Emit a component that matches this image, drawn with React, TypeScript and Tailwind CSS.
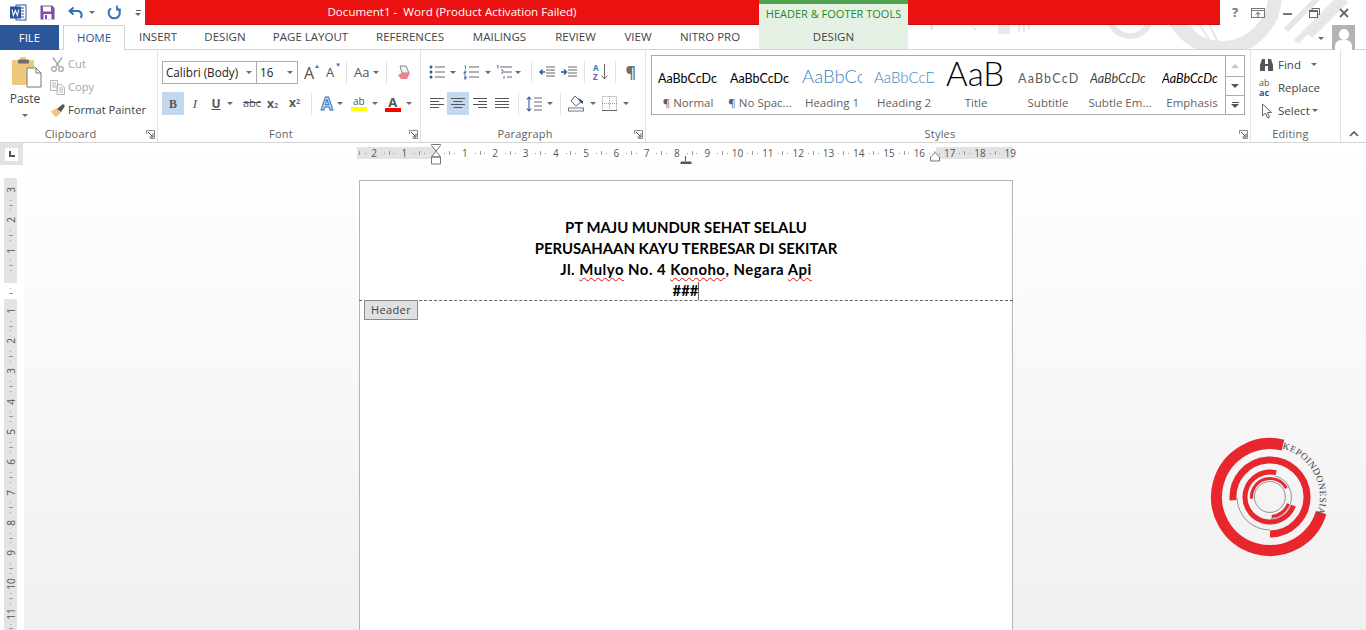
import type { ReactNode } from 'react';

const UI = "font-['Open_Sans',sans-serif]";

function Caret({ className = '' }: { className?: string }) {
  return <span className={`inline-block w-0 h-0 border-x-[3px] border-x-transparent border-t-[3px] border-t-[#6a6a6a] ${className}`} />;
}

function Sep({ className = '' }: { className?: string }) {
  return <span className={`inline-block w-px h-[22px] bg-[#e1e1e1] ${className}`} />;
}

function Lines({ rows, align = 'left' }: { rows: number[]; align?: 'left' | 'center' | 'right' }) {
  return (
    <svg width="16" height="14" viewBox="0 0 16 14">
      {rows.map((w, i) => {
        const x = align === 'left' ? 1 : align === 'right' ? 15 - w : 8 - w / 2;
        return <rect key={i} x={x} y={1 + i * 3} width={w} height="1" fill="#555" />;
      })}
    </svg>
  );
}

function Launcher() {
  return (
    <svg width="9" height="9" viewBox="0 0 9 9" className="shrink-0">
      <path d="M.5 4V.5H8.5V8.5H4" fill="none" stroke="#8a8a8a" />
      <path d="M2 2l4.500 4.500M7 3.500V7H3.500" fill="none" stroke="#555" />
    </svg>
  );
}

function Group({ w, label, children, launcher = true }: { w: string; label: string; children: ReactNode; launcher?: boolean }) {
  return (
    <div className={`${w} h-full shrink-0 flex flex-col border-r border-[#e2e2e2]`}>
      <div className="h-[75px] shrink-0">{children}</div>
      <div className={`relative h-[17px] pt-[2px] flex items-center justify-center text-[11px] text-[#5f5f5f] tracking-[0.2px] ${launcher ? 'pr-[16px]' : 'pr-[10px]'}`}>
        {label}
        {launcher && <span className="absolute right-[2px] top-[5px] flex"><Launcher /></span>}
      </div>
    </div>
  );
}

function Watermark() {
  return (
    <svg className="absolute left-0 top-0" width="1366" height="50" viewBox="0 0 1366 50">
      <g fill="none" stroke="#e7e7e7">
        <circle cx="1222" cy="-5" r="53" strokeWidth="14" />
        <circle cx="1130" cy="15" r="21" strokeWidth="6" />
        <path d="M1296 42l46-46M1310 36l36-36M1286 30l32-32" strokeWidth="6" />
        <path d="M1190 26l12 16M1198 22l14 22M1208 22l12 24" strokeWidth="2" />
      </g>
      <path d="M998 24h12v10h-12zM930 24h3v6h-3zM970 24l8 6h-4zM1018 24h2v8h-2zM1023 24h2v8h-2zM1028 24h2v6h-2z" fill="#e9e9e9" />
    </svg>
  );
}

function QuickAccess() {
  return (
    <div className="w-[145px] h-[25px] shrink-0 flex items-center">
      <svg className="ml-[10px]" width="17" height="17" viewBox="0 0 17 17">
        <rect x="6" y="1" width="10" height="15" fill="#fff" stroke="#2b579a" />
        <path d="M10 4h4M10 7h4M10 10h4M10 13h4" stroke="#2b579a" />
        <rect x="0" y="2.500" width="11" height="12" fill="#2b579a" />
        <path d="M2 5.500l1.400 6 2-5 2 5 1.400-6" fill="none" stroke="#fff" strokeWidth="1.100" />
      </svg>
      <svg className="ml-[13px]" width="15" height="15" viewBox="0 0 15 15">
        <path d="M.5.5H12L14.500 3V14.500H.5Z" fill="#7e4da5" />
        <rect x="3" y="1.500" width="8" height="5" fill="#fff" />
        <rect x="3.500" y="9" width="8" height="5.500" fill="#fff" />
        <rect x="5" y="10" width="2" height="4" fill="#7e4da5" />
      </svg>
      <svg className="ml-[13px]" width="16" height="15" viewBox="0 0 16 15">
        <path d="M5.500 2.500 1.500 6l4 3.500" fill="none" stroke="#2f6fb3" strokeWidth="2" />
        <path d="M2 6h7.500a4 4 0 0 1 3 6.800" fill="none" stroke="#2f6fb3" strokeWidth="2" />
      </svg>
      <Caret className="ml-[5px]" />
      <svg className="ml-[12px]" width="15" height="15" viewBox="0 0 15 15">
        <path d="M4 3.200a5.600 5.600 0 1 0 6.500 0" fill="none" stroke="#2f78b9" strokeWidth="2" />
        <path d="M10 .5V4.600H14" fill="none" stroke="#2f78b9" strokeWidth="1.800" />
      </svg>
      <span className="ml-[13px] flex flex-col items-center gap-[2px]">
        <span className="w-[5px] h-px bg-[#666]" />
        <Caret />
      </span>
    </div>
  );
}

function WindowButtons() {
  return (
    <div className="flex-1 h-[25px] flex items-center text-[#777]">
      <span className="w-[30px] text-center text-[13px] font-bold text-[#777]">?</span>
      <svg className="ml-[1px]" width="14" height="10" viewBox="0 0 14 10">
        <rect x=".5" y=".5" width="13" height="9" fill="none" stroke="#777" />
        <path d="M0 2.500h14" stroke="#777" />
        <path d="M7 9V4.500M4.800 6.500 7 4.300l2.200 2.200" fill="none" stroke="#555" />
      </svg>
      <span className="ml-[18px] w-[9px] h-[2px] mt-[3px] bg-[#777]" />
      <svg className="ml-[17px]" width="11" height="10" viewBox="0 0 11 10">
        <path d="M3 2.500V.5h7.500v6H8.500" fill="none" stroke="#666" />
        <rect x=".5" y="2.500" width="8" height="7" fill="none" stroke="#666" />
        <path d="M1 3.500h7" stroke="#666" />
      </svg>
      <svg className="ml-[19px]" width="10" height="10" viewBox="0 0 10 10">
        <path d="M1 1l8 8M9 1 1 9" stroke="#666" strokeWidth="1.800" />
      </svg>
    </div>
  );
}

const tabs = [
  { name: 'INSERT', w: 'w-[66px]' },
  { name: 'DESIGN', w: 'w-[68px]' },
  { name: 'PAGE LAYOUT', w: 'w-[103px]' },
  { name: 'REFERENCES', w: 'w-[96px]' },
  { name: 'MAILINGS', w: 'w-[83px]' },
  { name: 'REVIEW', w: 'w-[69px]' },
  { name: 'VIEW', w: 'w-[56px]' },
  { name: 'NITRO PRO', w: 'w-[88px]' },
];

function TabRow() {
  return (
    <div className="relative h-[25px] flex items-stretch border-b border-[#d4d4d4] text-[11.5px] text-[#444]">
      <div className="w-[59px] -mb-px flex items-center justify-center bg-[#2b579a] text-white">FILE</div>
      <div className="ml-[4px] w-[62px] -mb-px flex items-center justify-center bg-white border border-b-0 border-[#d4d4d4] text-[#2b579a]">HOME</div>
      {tabs.map(t => (
        <div key={t.name} className={`${t.w} flex items-center justify-center`}>{t.name}</div>
      ))}
      <div className="ml-[5px] w-[149px] flex items-center justify-center bg-[#e5f1e5]">DESIGN</div>
      <div className="flex-1 flex items-center justify-end">
        <Caret className="mr-[8px] mt-[3px]" />
        <div className="relative w-[23px] h-[25px] mr-[11px] bg-[#b3b3b3] overflow-hidden">
          <span className="absolute left-[7px] top-[4px] w-[10px] h-[11px] rounded-full bg-white" />
          <span className="absolute left-[3px] top-[15px] w-[17px] h-[12px] rounded-t-[6px] bg-white" />
        </div>
      </div>
    </div>
  );
}

function Clipboard() {
  return (
    <Group w="w-[158px]" label="Clipboard">
      <div className="flex h-full">
        <div className="w-[50px] flex flex-col items-center pt-[7px]">
          <svg className="ml-[4px]" width="30" height="32" viewBox="0 0 30 32">
            <path d="M0 3h8V0h6v3h8v25H0Z" fill="#eec87f" />
            <rect x="6" y="2.500" width="11" height="4" rx="1" fill="#6d6d6d" />
            <path d="M15 11h9l5 5v14H15Z" fill="#fff" stroke="#777" />
            <path d="M24 11v5h5" fill="none" stroke="#777" />
          </svg>
          <span className="mt-px text-[12px] text-[#444]">Paste</span>
          <Caret className="mt-[6px]" />
        </div>
        <div className="flex flex-col pt-[3px] text-[11.2px]">
          <div className="h-[23px] flex items-center text-[#a6a6a6]">
            <svg width="15" height="15" viewBox="0 0 15 15">
              <path d="M3 .5l6 9M12 .5l-6 9" stroke="#a8a8a8" strokeWidth="1.400" />
              <circle cx="4" cy="12" r="2.300" fill="none" stroke="#a8a8a8" strokeWidth="1.300" />
              <circle cx="11" cy="12" r="2.300" fill="none" stroke="#a8a8a8" strokeWidth="1.300" />
            </svg>
            <span className="ml-[3px]">Cut</span>
          </div>
          <div className="h-[23px] flex items-center text-[#a6a6a6]">
            <svg width="15" height="15" viewBox="0 0 15 15">
              <path d="M.5.5h7v10h-7zM7 4.500h4l3.500 3v7h-7.500z" fill="#fff" stroke="#b5b5b5" />
              <path d="M2 3h4M2 5h4M2 7h4M9 8h4M9 10h4M9 12h4" stroke="#b5b5b5" />
            </svg>
            <span className="ml-[3px]">Copy</span>
          </div>
          <div className="h-[23px] flex items-center text-[#444]">
            <svg width="16" height="15" viewBox="0 0 16 15">
              <path d="M1 8l6-3 4 5-5 4C4 13 2 10 1 8Z" fill="#eec87f" />
              <path d="M7 6l6-5 2 2-4 6" fill="#555" />
            </svg>
            <span className="ml-[2px] whitespace-nowrap">Format Painter</span>
          </div>
        </div>
      </div>
    </Group>
  );
}

function Font() {
  return (
    <Group w="w-[263px]" label="Font">
      <div className="pl-[4px] pt-[11px]">
        <div className="flex items-center h-[23px]">
          <div className="w-[95px] h-[23px] border border-[#ababab] flex items-center justify-between pl-[3px] pr-[4px] text-[11.7px] text-[#222]">
            <span className="whitespace-nowrap">Calibri (Body)</span><Caret />
          </div>
          <div className="w-[42px] h-[23px] -ml-px border border-[#ababab] flex items-center justify-between pl-[3px] pr-[4px] text-[11.7px] text-[#222]">
            <span>16</span><Caret />
          </div>
          <span className="ml-[6px] w-[15px] text-[16px] text-[#555] leading-none relative">A<span className="absolute left-[10px] top-[-2px] text-[6px] text-[#2f78b9]">▲</span></span>
          <span className="ml-[7px] w-[15px] text-[13px] text-[#555] leading-none relative">A<span className="absolute left-[9px] top-[-4px] text-[6px] text-[#2f78b9]">▼</span></span>
          <Sep className="ml-[5px]" />
          <span className="ml-[7px] text-[13px] text-[#555]">Aa</span>
          <Caret className="ml-[4px]" />
          <Sep className="ml-[7px]" />
          <svg className="ml-[9px]" width="16" height="16" viewBox="0 0 16 16">
            <path d="M4 1h6l3 7H6Z" fill="#f3f3f3" stroke="#888" />
            <path d="M6 8h8l-3 6H5L2 10Z" fill="#ee7f8b" />
          </svg>
        </div>
        <div className="flex items-center h-[23px] mt-[8px] text-[#555]">
          <span className="w-[22px] h-[23px] flex items-center justify-center bg-[#c3d7ef] text-[12px] font-bold font-['Liberation_Serif',serif]">B</span>
          <span className="ml-[5px] w-[12px] text-center text-[13px] italic font-['Liberation_Serif',serif]">I</span>
          <span className="ml-[9px] w-[12px] text-center text-[12px] font-bold underline">U</span>
          <Caret className="ml-[5px]" />
          <span className="ml-[10px] w-[19px] text-[11px] line-through">abc</span>
          <span className="ml-[5px] w-[15px] text-[12px] font-bold">x<span className="text-[7px] text-[#2f78b9]">2</span></span>
          <span className="ml-[7px] w-[15px] text-[12px] font-bold -mt-px">x<sup className="text-[7px] text-[#2f78b9]">2</sup></span>
          <Sep className="ml-[7px]" />
          <span className="ml-[9px] text-[17px] leading-none font-bold text-[#cfe0f5] [-webkit-text-stroke:1px_#2f78b9]">A</span>
          <Caret className="ml-[4px]" />
          <span className="ml-[8px] w-[16px] flex flex-col items-center">
            <span className="text-[10px] leading-[11px]">ab</span>
            <span className="w-[16px] h-[4px] bg-[#ffff00]" />
          </span>
          <Caret className="ml-[5px]" />
          <span className="ml-[7px] w-[16px] flex flex-col items-center">
            <span className="text-[13px] leading-[12px] font-bold">A</span>
            <span className="w-[16px] h-[4px] bg-[#ff0000]" />
          </span>
          <Caret className="ml-[5px]" />
        </div>
      </div>
    </Group>
  );
}

function Paragraph() {
  return (
    <Group w="w-[225px]" label="Paragraph">
      <div className="pl-[8px] pt-[13px]">
        <div className="flex items-center h-[18px]">
          <svg width="16" height="15" viewBox="0 0 16 15">
            <path d="M6 2h10M6 7h10M6 12h10" stroke="#666" />
            <circle cx="2" cy="2" r="1.500" fill="#2b579a" /><circle cx="2" cy="7" r="1.500" fill="#2b579a" /><circle cx="2" cy="12" r="1.500" fill="#2b579a" />
          </svg>
          <Caret className="ml-[5px]" />
          <svg className="ml-[7px]" width="16" height="15" viewBox="0 0 16 15">
            <path d="M6 2h10M6 7h10M6 12h10" stroke="#666" />
            <path d="M1.500 1h1v3M1 6h2v1.500H1V9h2M1 11h2v3H1M1 12.500h2" fill="none" stroke="#2b579a" strokeWidth=".8" />
          </svg>
          <Caret className="ml-[6px]" />
          <svg className="ml-[5px]" width="16" height="15" viewBox="0 0 16 15">
            <path d="M4 2h12M8 7h8M11 12h5" stroke="#666" />
            <path d="M1 .5h1v3M5 5h2v3H5M8 11v3" fill="none" stroke="#2b579a" strokeWidth=".8" />
          </svg>
          <Caret className="ml-[3px]" />
          <Sep className="ml-[10px]" />
          <svg className="ml-[7px]" width="16" height="14" viewBox="0 0 16 14">
            <path d="M7 2h9M7 5h9M7 8h9M7 11h9" stroke="#666" />
            <path d="M6 7H1M3.500 4.500 1 7l2.500 2.500" fill="none" stroke="#2b579a" strokeWidth="1.400" />
          </svg>
          <svg className="ml-[6px]" width="16" height="14" viewBox="0 0 16 14">
            <path d="M7 2h9M7 5h9M7 8h9M7 11h9" stroke="#666" />
            <path d="M0 7h5M3 4.500 5.500 7 3 9.500" fill="none" stroke="#2b579a" strokeWidth="1.400" />
          </svg>
          <Sep className="ml-[7px]" />
          <span className="ml-[8px] flex items-center">
            <span className="flex flex-col text-[8px] leading-[9px] font-bold"><span className="text-[#2f78b9]">A</span><span className="text-[#7e4da5]">Z</span></span>
            <svg className="ml-[2px]" width="7" height="16" viewBox="0 0 7 16"><path d="M3.500 0v15M.5 11.500l3 3.500 3-3.500" fill="none" stroke="#666" /></svg>
          </span>
          <Sep className="ml-[7px]" />
          <span className="ml-[10px] text-[16px] font-bold text-[#6f6f6f] leading-none">¶</span>
        </div>
        <div className="flex items-center h-[23px] mt-[11px]">
          <Lines rows={[14, 9, 14, 9]} />
          <span className="ml-[2px] w-[22px] h-[23px] bg-[#c3d7ef] flex items-center justify-center"><Lines rows={[14, 9, 14, 9]} align="center" /></span>
          <span className="ml-[3px] flex"><Lines rows={[14, 9, 14, 9]} align="right" /></span>
          <span className="ml-[6px] flex"><Lines rows={[14, 14, 14, 14]} /></span>
          <Sep className="ml-[8px]" />
          <svg className="ml-[7px]" width="16" height="16" viewBox="0 0 16 16">
            <path d="M8 2h8M8 6h8M8 10h8M8 14h8" stroke="#666" />
            <path d="M3 1v14M.8 3.500 3 1l2.200 2.500M.8 12.500 3 15l2.200-2.500" fill="none" stroke="#2b579a" strokeWidth="1.100" />
          </svg>
          <Caret className="ml-[5px]" />
          <Sep className="ml-[7px]" />
          <svg className="ml-[7px]" width="17" height="17" viewBox="0 0 17 17">
            <path d="M7 1l6 6-5 4-5-5Z" fill="#fff" stroke="#666" />
            <path d="M10 3l5 3v3l-3-2" fill="#2b579a" />
            <rect x=".5" y="13" width="15" height="3" fill="#fff" stroke="#777" />
          </svg>
          <Caret className="ml-[5px]" />
          <svg className="ml-[6px]" width="15" height="15" viewBox="0 0 15 15">
            <rect x=".5" y=".5" width="14" height="14" fill="none" stroke="#999" strokeDasharray="1 1" />
            <path d="M7.500 0v15M0 7.500h15" stroke="#999" strokeDasharray="1 1" />
            <path d="M0 14.500h15" stroke="#666" />
          </svg>
          <Caret className="ml-[6px]" />
        </div>
      </div>
    </Group>
  );
}

const styles = [
  { label: '¶ Normal', preview: 'AaBbCcDc', cls: 'text-[12.5px] text-black' },
  { label: '¶ No Spac...', preview: 'AaBbCcDc', cls: 'text-[12.5px] text-black' },
  { label: 'Heading 1', preview: 'AaBbCc', cls: 'text-[18.5px] text-[#3b84c4] font-light' },
  { label: 'Heading 2', preview: 'AaBbCcD', cls: 'text-[15px] text-[#3b84c4] font-light' },
  { label: 'Title', preview: 'AaBl', cls: 'text-[33px] text-black font-light mb-[-5px]' },
  { label: 'Subtitle', preview: 'AaBbCcD', cls: 'text-[12.5px] text-[#5a5a5a] tracking-[1.2px]' },
  { label: 'Subtle Em...', preview: 'AaBbCcDc', cls: 'text-[12.5px] text-[#404040] italic' },
  { label: 'Emphasis', preview: 'AaBbCcDc', cls: 'text-[12.5px] text-black italic' },
];

function Styles() {
  return (
    <Group w="w-[605px]" label="Styles">
      <div className="pl-[5px] pt-[5px]">
        <div className="w-[594px] h-[60px] border border-[#ababab] flex">
          {styles.map(s => (
            <div key={s.label} className="w-[72px] h-full shrink-0 flex flex-col items-center">
              <div className="w-[60px] h-[38px] flex items-end justify-start overflow-hidden pb-[9px] leading-none font-['Lato',sans-serif]">
                <span className={`${s.cls} whitespace-nowrap`}>{s.preview}</span>
              </div>
              <span className="text-[11.5px] text-[#5f5f5f] leading-[17px] whitespace-nowrap">{s.label}</span>
            </div>
          ))}
          <div className="ml-[-3px] flex-1 flex flex-col border-l border-[#ababab]">
            <div className="h-[20px] flex items-center justify-center"><span className="w-0 h-0 border-x-[4px] border-x-transparent border-b-[4px] border-b-[#c6c6c6]" /></div>
            <div className="h-[20px] flex items-center justify-center border-y border-[#ababab]"><span className="w-0 h-0 border-x-[4px] border-x-transparent border-t-[4px] border-t-[#555]" /></div>
            <div className="flex-1 flex flex-col items-center justify-center gap-[1px]"><span className="w-[7px] h-px bg-[#555]" /><span className="w-0 h-0 border-x-[4px] border-x-transparent border-t-[4px] border-t-[#555]" /></div>
          </div>
        </div>
      </div>
    </Group>
  );
}

function Editing() {
  return (
    <Group w="w-[90px]" label="Editing" launcher={false}>
      <div className="pl-[8px] pt-[3px] text-[11.5px] text-[#444]">
        <div className="h-[23px] flex items-center">
          <svg width="15" height="14" viewBox="0 0 15 14">
            <path d="M1 7l2-6h3v5h3V1h3l2 6v6H9V8H6v5H1Z" fill="#555" />
          </svg>
          <span className="ml-[4px]">Find</span><Caret className="ml-[10px]" />
        </div>
        <div className="h-[23px] flex items-center">
          <span className="w-[15px] flex flex-col text-[9px] leading-[10px]"><span className="text-[#555]">ab</span><span className="text-[#2b579a] font-bold">ac</span></span>
          <span className="ml-[4px]">Replace</span>
        </div>
        <div className="h-[23px] flex items-center">
          <svg width="15" height="16" viewBox="0 0 15 16">
            <path d="M3.500 1v12l3-3 2 5 2-1-2-4.500h4Z" fill="#fff" stroke="#666" />
          </svg>
          <span className="ml-[4px]">Select</span><Caret className="ml-[2px]" />
        </div>
      </div>
    </Group>
  );
}

function Ribbon() {
  return (
    <div className="h-[93px] flex border-b border-[#d4d4d4] bg-white">
      <Clipboard />
      <Font />
      <Paragraph />
      <Styles />
      <Editing />
      <div className="flex-1 flex items-end justify-center pb-[5px]">
        <svg width="10" height="6" viewBox="0 0 10 6"><path d="M1 5l4-4 4 4" fill="none" stroke="#555" strokeWidth="1.600" /></svg>
      </div>
    </div>
  );
}

const hNumbers = ['2', '1', '', '1', '2', '3', '4', '5', '6', '7', '8', '9', '10', '11', '12', '13', '14', '15', '16', '17', '18', '19'];

function HRuler() {
  return (
    <div className="ml-[333px] mt-[4px] w-[656px] h-[12px] flex items-center bg-[linear-gradient(to_right,#e3e3e3_0,#e3e3e3_79px,#ffffff_79px,#ffffff_579px,#e3e3e3_579px)] text-[10px] text-[#555] relative">
      <div className="w-[11px] shrink-0 flex justify-around items-center"><span className="w-px h-[4px] bg-[#999]" /><span className="w-px h-px bg-[#999]" /></div>
      {hNumbers.map((n, i) => (
        <div key={i} className={`${i === hNumbers.length - 1 ? 'w-[12px]' : 'w-[30.3px]'} shrink-0 flex items-center`}>
          <span className="w-[12px] text-center leading-none">{n}</span>
          {i < hNumbers.length - 1 && (
            <span className="flex-1 flex justify-evenly items-center">
              <span className="w-px h-px bg-[#999]" /><span className="w-px h-[4px] bg-[#999]" /><span className="w-px h-px bg-[#999]" />
            </span>
          )}
        </div>
      ))}
      {/* indent markers */}
      <svg className="absolute left-[73px] top-[-3px]" width="12" height="22" viewBox="0 0 12 22">
        <path d="M1.500.5h9v1L6 7 1.500 1.500ZM6 7l4.500 6h-9Z M1.500 13h9v7h-9Z" fill="#fff" stroke="#777" />
      </svg>
      <svg className="absolute left-[323px] top-[9px]" width="12" height="8" viewBox="0 0 12 8"><path d="M5.500 0v5M1 6h10v2H1Z" fill="#555" stroke="#555" /></svg>
      <svg className="absolute left-[572px] top-[5px]" width="12" height="10" viewBox="0 0 12 10"><path d="M6 .5 10.500 5v4h-9V5Z" fill="#fff" stroke="#777" /></svg>
    </div>
  );
}

const vTop = ['3', '2', '1'];
const vBottom = ['1', '2', '3', '4', '5', '6', '7', '8', '9', '10', '11'];

function VCell({ n }: { n: string }) {
  return (
    <div className="h-[30.3px] shrink-0 flex flex-col items-center">
      <span className="h-[12px] flex items-center -rotate-90 text-[10px] text-[#555] leading-none">{n}</span>
      <span className="flex-1 flex flex-col justify-evenly items-center">
        <span className="w-px h-px bg-[#999]" /><span className="w-[4px] h-px bg-[#999]" /><span className="w-px h-px bg-[#999]" />
      </span>
    </div>
  );
}

function VRuler() {
  return (
    <div className="w-[24px] shrink-0 bg-white">
      <div className="w-[23px] h-[22px] bg-[#e3e3e3] flex items-center justify-center">
        <span className="w-[13px] h-[13px] bg-white flex items-center justify-center">
          <span className="w-[6px] h-[6px] border-l-2 border-b-2 border-[#555]" />
        </span>
      </div>
      <div className="ml-[4px] mt-[13px] w-[13px] flex flex-col items-center">
        <div className="w-full bg-[#e3e3e3] flex flex-col pt-[6px] pb-[8px]">
          {vTop.map(n => <VCell key={n} n={n} />)}
        </div>
        <div className="w-full h-[16px] bg-white flex flex-col justify-evenly items-center">
          <span className="w-px h-px bg-[#999]" /><span className="w-[4px] h-px bg-[#999]" />
        </div>
        <div className="w-full bg-[#e3e3e3] flex flex-col pt-[6px]">
          {vBottom.map(n => <VCell key={n} n={n} />)}
        </div>
      </div>
    </div>
  );
}

function Squiggle({ children }: { children: ReactNode }) {
  return <span className="underline decoration-wavy decoration-[#e01010] decoration-1 underline-offset-2">{children}</span>;
}

function Page() {
  return (
    <div className="ml-[335px] mt-[21px] w-[654px] h-[460px] bg-white border border-b-0 border-[#b5b5b5]">
      <div className="h-[120px] pt-[36px] border-b border-dashed border-[#666] -mx-px text-center text-[14.9px] leading-[21px] font-bold text-black font-['Lato',sans-serif]">
        <div>PT MAJU MUNDUR SEHAT SELALU</div>
        <div>PERUSAHAAN KAYU TERBESAR DI SEKITAR</div>
        <div className="tracking-[0.5px]">Jl. <Squiggle>Mulyo</Squiggle> No. 4 <Squiggle>Konoho</Squiggle>, Negara <Squiggle>Api</Squiggle></div>
        <div>###<span className="inline-block w-px h-[18px] bg-[#666] align-[-4px]" /></div>
      </div>
      <div className={`ml-[4px] -mt-px w-[54px] h-[20px] flex items-center justify-center bg-[#e0e0e0] border border-[#8a8a8a] text-[11px] tracking-[0.4px] text-[#444] ${UI}`}>Header</div>
    </div>
  );
}

function Logo() {
  const arc = (r: number, from: number, to: number) => {
    const p = (a: number) => {
      const t = ((a - 90) * Math.PI) / 180;
      return `${(70 + r * Math.cos(t)).toFixed(2)} ${(70 + r * Math.sin(t)).toFixed(2)}`;
    };
    const sweep = ((to - from) % 360 + 360) % 360;
    return `M${p(from)}A${r} ${r} 0 ${sweep > 180 ? 1 : 0} 1 ${p(to)}`;
  };
  return (
    <svg className="absolute left-[1200px] top-[427px]" width="140" height="140" viewBox="0 0 140 140">
      <g fill="none">
        <path d={arc(53.500, 107, 14)} stroke="#e8262d" strokeWidth="11" />
        <path d={arc(37, 265, 180)} stroke="#e8262d" strokeWidth="7" />
        <path d={arc(33, 180, 268)} stroke="#777" strokeWidth=".8" />
        <path d={arc(25, 110, 14)} stroke="#e8262d" strokeWidth="5" />
        <path d={arc(21.500, 14, 178)} stroke="#777" strokeWidth=".8" />
        <path d={arc(19.500, 110, 175)} stroke="#e8262d" strokeWidth="3" />
        <path d={arc(18.500, 265, 62)} stroke="#e8262d" strokeWidth="3" />
        <path d={arc(15.500, 0, 359)} stroke="#777" strokeWidth=".8" />
        <path id="logo-text" d={arc(50, 14, 110)} />
      </g>
      <text className="font-['Liberation_Serif',serif]" fontSize="9.500" fill="#444" letterSpacing=".5">
        <textPath href="#logo-text">KEPOINDONESIA</textPath>
      </text>
    </svg>
  );
}

export default function App() {
  return (
    <div className={`relative w-[1366px] h-[630px] overflow-hidden bg-white ${UI}`}>
      <Watermark />
      <div className="relative flex h-[25px]">
        <QuickAccess />
        <div className="w-[1075px] h-[25px] shrink-0 flex bg-[#ec1111] border-b border-[#c80e0e]">
          <div className="w-[614px] flex items-center justify-center text-[11.6px] text-white whitespace-pre">Document1 -  Word (Product Activation Failed)</div>
          <div className="w-[149px] h-[25px] bg-[#e5f1e5] border-t-[4px] border-[#4ea24e] flex items-center justify-center text-[11px] text-[#1e8a1e] whitespace-nowrap">HEADER &amp; FOOTER TOOLS</div>
        </div>
        <WindowButtons />
      </div>
      <TabRow />
      <Ribbon />
      <div className="flex h-[487px] overflow-hidden">
        <VRuler />
        <div className="flex-1 bg-gradient-to-b from-white to-[#f0f0f0]">
          <HRuler />
          <Page />
        </div>
      </div>
      <Logo />
    </div>
  );
}
